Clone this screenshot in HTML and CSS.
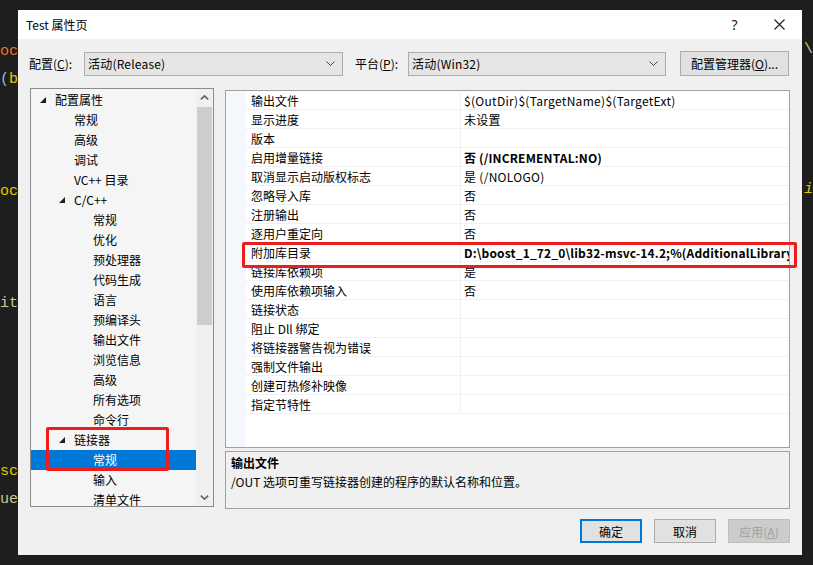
FILE: index.html
```html
<!DOCTYPE html>
<html lang="zh-CN">
<head>
<meta charset="utf-8">
<title>Test 属性页</title>
<link rel="stylesheet" href="styles.css">
</head>
<body>
<div class="code code-left">
  <div class="cl"><span class="c-or">oc</span></div>
  <div class="cl"><span class="c-gr">(</span><span class="c-ye">b</span></div>
  <div class="cl"></div>
  <div class="cl"></div>
  <div class="cl"></div>
  <div class="cl"><span class="c-ye">oc</span></div>
  <div class="cl"></div>
  <div class="cl"></div>
  <div class="cl"></div>
  <div class="cl"><span class="c-kh">it</span></div>
  <div class="cl"></div>
  <div class="cl"></div>
  <div class="cl"></div>
  <div class="cl"></div>
  <div class="cl"></div>
  <div class="cl"><span class="c-ye">sc</span></div>
  <div class="cl"><span class="c-kh">ue</span></div>
</div>
<div class="code code-right">
  <div class="cl"><span class="c-kh">\</span></div>
  <div class="cl"></div>
  <div class="cl"></div>
  <div class="cl"></div>
  <div class="cl"></div>
  <div class="cl"><span class="c-ye c-it">i</span></div>
</div>

<div class="dialog">
  <div class="titlebar">
    <span class="title">Test 属性页</span>
    <span class="tb-btn tb-help">?</span>
    <span class="tb-btn tb-close"><svg width="11" height="11" viewBox="0 0 11 11"><path d="M0.5 0.5 L10.5 10.5 M10.5 0.5 L0.5 10.5" stroke="#1a1a1a" stroke-width="1.1" fill="none"/></svg></span>
  </div>

  <div class="toolbar">
    <span class="lbl lbl-cfg">配置(<u>C</u>):</span>
    <div class="combo combo-cfg"><span>活动(Release)</span><svg class="chev" width="9" height="5" viewBox="0 0 9 5"><path d="M0.5 0.5 L4.5 4.5 L8.5 0.5" stroke="#444" stroke-width="1" fill="none"/></svg></div>
    <span class="lbl lbl-plat">平台(<u>P</u>):</span>
    <div class="combo combo-plat"><span>活动(Win32)</span><svg class="chev" width="9" height="5" viewBox="0 0 9 5"><path d="M0.5 0.5 L4.5 4.5 L8.5 0.5" stroke="#444" stroke-width="1" fill="none"/></svg></div>
    <button class="btn btn-mgr">配置管理器(<u>O</u>)...</button>
  </div>

  <div class="main">
    <div class="tree">
      <div class="tree-rows">
        <div class="tr l0"><svg class="tri" width="6" height="6" viewBox="0 0 6 6"><polygon points="6,0 6,6 0,6" fill="#1e1e1e"/></svg>配置属性</div>
        <div class="tr l1">常规</div>
        <div class="tr l1">高级</div>
        <div class="tr l1">调试</div>
        <div class="tr l1">VC++ 目录</div>
        <div class="tr l1x"><svg class="tri" width="6" height="6" viewBox="0 0 6 6"><polygon points="6,0 6,6 0,6" fill="#1e1e1e"/></svg>C/C++</div>
        <div class="tr l2">常规</div>
        <div class="tr l2">优化</div>
        <div class="tr l2">预处理器</div>
        <div class="tr l2">代码生成</div>
        <div class="tr l2">语言</div>
        <div class="tr l2">预编译头</div>
        <div class="tr l2">输出文件</div>
        <div class="tr l2">浏览信息</div>
        <div class="tr l2">高级</div>
        <div class="tr l2">所有选项</div>
        <div class="tr l2">命令行</div>
        <div class="tr l1x"><svg class="tri" width="6" height="6" viewBox="0 0 6 6"><polygon points="6,0 6,6 0,6" fill="#1e1e1e"/></svg>链接器</div>
        <div class="tr l2 sel">常规</div>
        <div class="tr l2">输入</div>
        <div class="tr l2">清单文件</div>
      </div>
      <div class="vscroll">
        <div class="sb-arrow"><svg width="9" height="5" viewBox="0 0 9 5"><path d="M0.8 4.4 L4.5 0.9 L8.2 4.4" stroke="#606060" stroke-width="1.6" fill="none"/></svg></div>
        <div class="sb-track"><div class="sb-thumb"></div></div>
        <div class="sb-arrow"><svg width="9" height="5" viewBox="0 0 9 5"><path d="M0.8 0.6 L4.5 4.1 L8.2 0.6" stroke="#606060" stroke-width="1.6" fill="none"/></svg></div>
      </div>
    </div>

    <div class="right">
      <div class="grid">
        <div class="gutter"></div>
        <div class="rows">
          <div class="row"><span class="name">输出文件</span><span class="val">$(OutDir)$(TargetName)$(TargetExt)</span></div>
          <div class="row"><span class="name">显示进度</span><span class="val">未设置</span></div>
          <div class="row"><span class="name">版本</span><span class="val"></span></div>
          <div class="row"><span class="name">启用增量链接</span><span class="val b">否 (/INCREMENTAL:NO)</span></div>
          <div class="row"><span class="name">取消显示启动版权标志</span><span class="val">是 (/NOLOGO)</span></div>
          <div class="row"><span class="name">忽略导入库</span><span class="val">否</span></div>
          <div class="row"><span class="name">注册输出</span><span class="val">否</span></div>
          <div class="row"><span class="name">逐用户重定向</span><span class="val">否</span></div>
          <div class="row"><span class="name">附加库目录</span><span class="val b">D:\boost_1_72_0\lib32-msvc-14.2;%(AdditionalLibraryDirectories)</span></div>
          <div class="row"><span class="name">链接库依赖项</span><span class="val">是</span></div>
          <div class="row"><span class="name">使用库依赖项输入</span><span class="val">否</span></div>
          <div class="row"><span class="name">链接状态</span><span class="val"></span></div>
          <div class="row"><span class="name">阻止 Dll 绑定</span><span class="val"></span></div>
          <div class="row"><span class="name">将链接器警告视为错误</span><span class="val"></span></div>
          <div class="row"><span class="name">强制文件输出</span><span class="val"></span></div>
          <div class="row"><span class="name">创建可热修补映像</span><span class="val"></span></div>
          <div class="row"><span class="name">指定节特性</span><span class="val"></span></div>
        </div>
      </div>
      <div class="desc">
        <div class="desc-title">输出文件</div>
        <div class="desc-text">/OUT 选项可重写链接器创建的程序的默认名称和位置。</div>
      </div>
    </div>
  </div>

  <div class="footer">
    <button class="btn btn-foot btn-default">确定</button>
    <button class="btn btn-foot">取消</button>
    <button class="btn btn-foot btn-disabled">应用(<u>A</u>)</button>
  </div>

  <div class="redbox rb-tree"></div>
  <div class="redbox rb-grid"></div>
</div>
</body>
</html>
```

FILE: styles.css
```css
* { box-sizing: border-box; }
html, body { margin: 0; padding: 0; }
body {
  width: 813px;
  height: 565px;
  overflow: hidden;
  position: relative;
  background: #1e1e1e;
  font-family: "Noto Sans CJK SC", "Noto Sans", sans-serif;
  font-size: 12px;
  color: #000;
}

/* editor text behind the dialog */
.code {
  position: absolute;
  top: 38px;
  font-family: "Liberation Mono", "DejaVu Sans Mono", monospace;
  font-size: 15px;
  overflow: hidden;
}
.code-left { left: 0; width: 18px; }
.code-right { left: 802px; width: 11px; top: 36px; }
.cl { height: 28px; line-height: 28px; display: flex; justify-content: flex-end; white-space: nowrap; }
.code-right .cl { justify-content: flex-start; padding-left: 2px; }
.c-or { color: #e8731e; }
.c-ye { color: #e6c300; }
.c-gr { color: #a8b4c4; }
.c-kh { color: #c9c88f; }
.c-it { font-style: italic; }

/* dialog window */
.dialog {
  position: absolute;
  left: 18px;
  top: 10px;
  width: 784px;
  height: 545px;
  background: #f0f0f0;
  display: flex;
  flex-direction: column;
}
.titlebar {
  height: 29px;
  background: #fff;
  display: flex;
  align-items: center;
  padding-left: 8px;
  flex-shrink: 0;
}
.title { flex: 1; font-size: 12px; color: #000; }
.tb-btn {
  width: 45px;
  height: 29px;
  display: flex;
  align-items: center;
  justify-content: center;
}
.tb-help { font-family: "Noto Sans", sans-serif; font-size: 14px; color: #1a1a1a; }

.toolbar {
  margin-top: 12px;
  height: 25px;
  display: flex;
  align-items: center;
  padding-left: 11px;
  flex-shrink: 0;
}
.lbl { white-space: nowrap; }
.lbl-cfg { width: 55px; }
.lbl-plat { width: 53px; margin-left: 12px; }
.combo {
  height: 24px;
  background: #e5e5e5;
  border: 1px solid #adadad;
  display: flex;
  align-items: center;
  justify-content: space-between;
  padding: 0 7px 0 3px;
  letter-spacing: 0.2px;
}
.combo-cfg { width: 259px; }
.combo-plat { width: 258px; }
.btn {
  font-family: inherit;
  font-size: 12px;
  color: #000;
  background: #e1e1e1;
  border: 1px solid #adadad;
  padding: 0;
  margin: 0;
  display: flex;
  align-items: center;
  justify-content: center;
}
.btn-mgr { width: 109px; height: 25px; margin-left: 14px; }

.main {
  margin-top: 12px;
  height: 421px;
  display: flex;
  padding-left: 12px;
  flex-shrink: 0;
}
.tree {
  width: 184px;
  height: 419px;
  border: 1px solid #8c8c8c;
  background: #f5f5f5;
  display: flex;
}
.tree-rows { flex: 1; overflow: hidden; padding-top: 1px; }
.tr {
  height: 20px;
  line-height: 20px;
  display: flex;
  align-items: center;
  white-space: nowrap;
}
.tri { margin-right: 9px; flex-shrink: 0; }
.l0 { padding-left: 9px; }
.l1 { padding-left: 43px; }
.l1x { padding-left: 28px; }
.l2 { padding-left: 62px; }
.sel { background: #0078d7; color: #fff; }

.vscroll {
  width: 17px;
  background: #f0f0f0;
  display: flex;
  flex-direction: column;
}
.sb-arrow {
  height: 17px;
  display: flex;
  align-items: center;
  justify-content: center;
}
.sb-track { flex: 1; padding: 1px 1px 0 1px; }
.sb-thumb { height: 218px; background: #cdcdcd; }

.right {
  width: 565px;
  margin-left: 11px;
  display: flex;
  flex-direction: column;
}
.grid {
  margin-top: 2px;
  height: 358px;
  border: 1px solid #a0a0a0;
  background: #fff;
  display: flex;
  overflow: hidden;
}
.gutter { width: 20px; background: #f4f7fb; flex-shrink: 0; }
.rows { flex: 1; overflow: hidden; }
.row {
  height: 19px;
  display: flex;
  border-bottom: 1px solid #eff1f4;
  line-height: 18px;
}
.name {
  width: 215px;
  flex-shrink: 0;
  padding: 1px 0 0 5px;
  border-right: 1px solid #eff1f4;
  white-space: nowrap;
}
.val {
  flex: 1;
  padding: 1px 0 0 3px;
  white-space: nowrap;
  overflow: hidden;
  letter-spacing: 0.3px;
}
.b { font-weight: bold; letter-spacing: 0.15px; }

.desc {
  margin-top: 3px;
  height: 58px;
  border: 1px solid #a0a0a0;
  background: #f0f0f0;
  padding: 1px 0 0 5px;
  line-height: 19px;
}
.desc-title { font-weight: bold; }

.footer {
  margin-top: 10px;
  height: 24px;
  display: flex;
  justify-content: flex-end;
  gap: 12px;
  padding-right: 12px;
  flex-shrink: 0;
}
.btn-foot { width: 62px; height: 24px; }
.btn-default { border: 2px solid #0078d7; }
.btn-disabled { background: #cccccc; border-color: #bfbfbf; color: #a0a0a0; }

/* annotation boxes drawn over the dialog */
.redbox {
  position: absolute;
  border: 3px solid #ee1d1d;
  border-radius: 2px;
}
.rb-tree { left: 28px; top: 417px; width: 123px; height: 44px; }
.rb-grid { left: 224px; top: 232px; width: 555px; height: 26px; }
```
